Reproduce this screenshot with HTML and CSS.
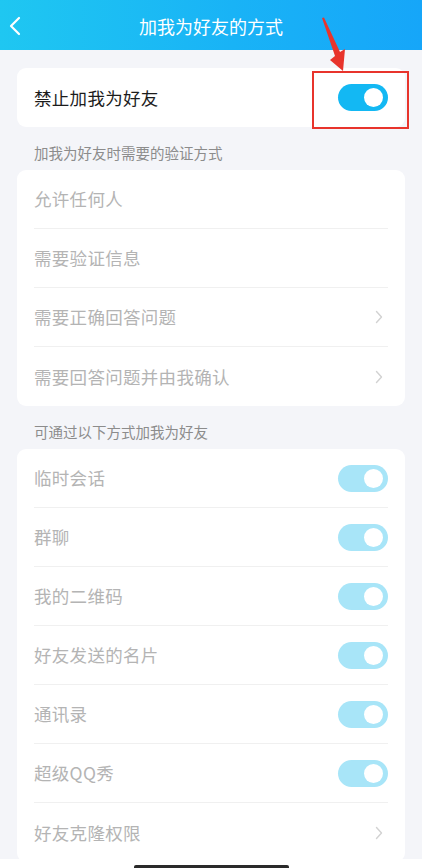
FILE: index.html
```html
<!DOCTYPE html>
<html lang="zh">
<head>
<meta charset="utf-8">
<link rel="stylesheet" href="styles.css">
</head>
<body>
<div class="page">
  <header class="topbar">
    <svg class="back" width="14" height="20" viewBox="0 0 14 20"><path d="M11 2 L3 10 L11 18" fill="none" stroke="#fff" stroke-width="2.2" stroke-linecap="round" stroke-linejoin="round"/></svg>
    <div class="title">加我为好友的方式</div>
  </header>

  <main class="content">
    <section class="card">
      <div class="row main-row">
        <span class="label dark">禁止加我为好友</span>
        <span class="toggle on"><span class="knob"></span></span>
      </div>
    </section>

    <div class="section-title">加我为好友时需要的验证方式</div>
    <section class="card">
      <div class="row"><span class="label">允许任何人</span></div>
      <div class="row"><span class="label">需要验证信息</span></div>
      <div class="row"><span class="label">需要正确回答问题</span><svg class="chev" width="8" height="14" viewBox="0 0 8 14"><path d="M1.5 1.5 L6.5 7 L1.5 12.5" fill="none" stroke="#d2d2d2" stroke-width="1.4" stroke-linecap="round" stroke-linejoin="round"/></svg></div>
      <div class="row"><span class="label">需要回答问题并由我确认</span><svg class="chev" width="8" height="14" viewBox="0 0 8 14"><path d="M1.5 1.5 L6.5 7 L1.5 12.5" fill="none" stroke="#d2d2d2" stroke-width="1.4" stroke-linecap="round" stroke-linejoin="round"/></svg></div>
    </section>

    <div class="section-title">可通过以下方式加我为好友</div>
    <section class="card">
      <div class="row"><span class="label">临时会话</span><span class="toggle dim"><span class="knob"></span></span></div>
      <div class="row"><span class="label">群聊</span><span class="toggle dim"><span class="knob"></span></span></div>
      <div class="row"><span class="label">我的二维码</span><span class="toggle dim"><span class="knob"></span></span></div>
      <div class="row"><span class="label">好友发送的名片</span><span class="toggle dim"><span class="knob"></span></span></div>
      <div class="row"><span class="label">通讯录</span><span class="toggle dim"><span class="knob"></span></span></div>
      <div class="row"><span class="label">超级QQ秀</span><span class="toggle dim"><span class="knob"></span></span></div>
      <div class="row"><span class="label">好友克隆权限</span><svg class="chev" width="8" height="14" viewBox="0 0 8 14"><path d="M1.5 1.5 L6.5 7 L1.5 12.5" fill="none" stroke="#d2d2d2" stroke-width="1.4" stroke-linecap="round" stroke-linejoin="round"/></svg></div>
    </section>
  </main>

  <div class="highlight-box"></div>
  <svg class="arrow" width="40" height="60" viewBox="0 0 40 60">
    <polygon points="1,0 3,-0.5 19,34 24,31 22,53 9,42 14,38" fill="#e8342c"/>
  </svg>

  <div class="home-area"><div class="home-bar"></div></div>
</div>
</body>
</html>
```
FILE: styles.css
```css
* { box-sizing: border-box; }
html, body {
  margin: 0;
  padding: 0;
  background: #f4f5f9;
}
body {
  font-family: "Noto Sans CJK SC", "Noto Sans", sans-serif;
}
.page {
  position: relative;
  width: 422px;
  min-height: 868px;
  overflow: hidden;
}
.topbar {
  height: 50px;
  background: linear-gradient(90deg, #1fc7f1 0%, #19b3f6 55%, #16a6f9 100%);
  display: flex;
  align-items: center;
  justify-content: center;
  position: relative;
}
.back {
  position: absolute;
  left: 8px;
  top: 16px;
}
.title {
  color: #fff;
  font-size: 18px;
  line-height: 24px;
  margin-top: 2px;
}
.content {
  padding: 18px 17px 0 17px;
}
.card {
  background: #fff;
  border-radius: 9px;
  padding: 0 17px;
}
.row {
  height: 59px;
  display: flex;
  align-items: center;
  justify-content: space-between;
  border-bottom: 1px solid #f0f0f0;
}
.row:last-child {
  border-bottom: none;
}
.label {
  font-size: 17.5px;
  color: #b4b4b4;
  line-height: 24px;
  letter-spacing: 0.3px;
}
.label.dark {
  color: #1c1c1c;
}
.section-title {
  font-size: 14.5px;
  color: #8c8c8c;
  line-height: 18px;
  padding: 17px 17px 8px 17px;
}
.chev {
  margin-right: 5px;
}
.toggle {
  width: 50px;
  height: 27px;
  border-radius: 14px;
  display: flex;
  align-items: center;
  justify-content: flex-end;
  padding-right: 5px;
}
.toggle.on {
  background: #13b8f3;
}
.toggle.dim {
  background: #a8e5f8;
}
.knob {
  width: 19px;
  height: 19px;
  border-radius: 50%;
  background: #fff;
}
.highlight-box {
  position: absolute;
  left: 312px;
  top: 71px;
  width: 97px;
  height: 58px;
  border: 2px solid #e8342c;
}
.arrow {
  position: absolute;
  left: 321px;
  top: 18px;
  overflow: visible;
}
.home-area {
  position: absolute;
  left: 0;
  right: 0;
  bottom: 0;
  height: 9px;
  background: #fff;
  display: flex;
  justify-content: center;
  align-items: flex-end;
}
.home-bar {
  width: 155px;
  height: 3px;
  background: #2a2a2a;
  border-radius: 2px 2px 0 0;
}
```
